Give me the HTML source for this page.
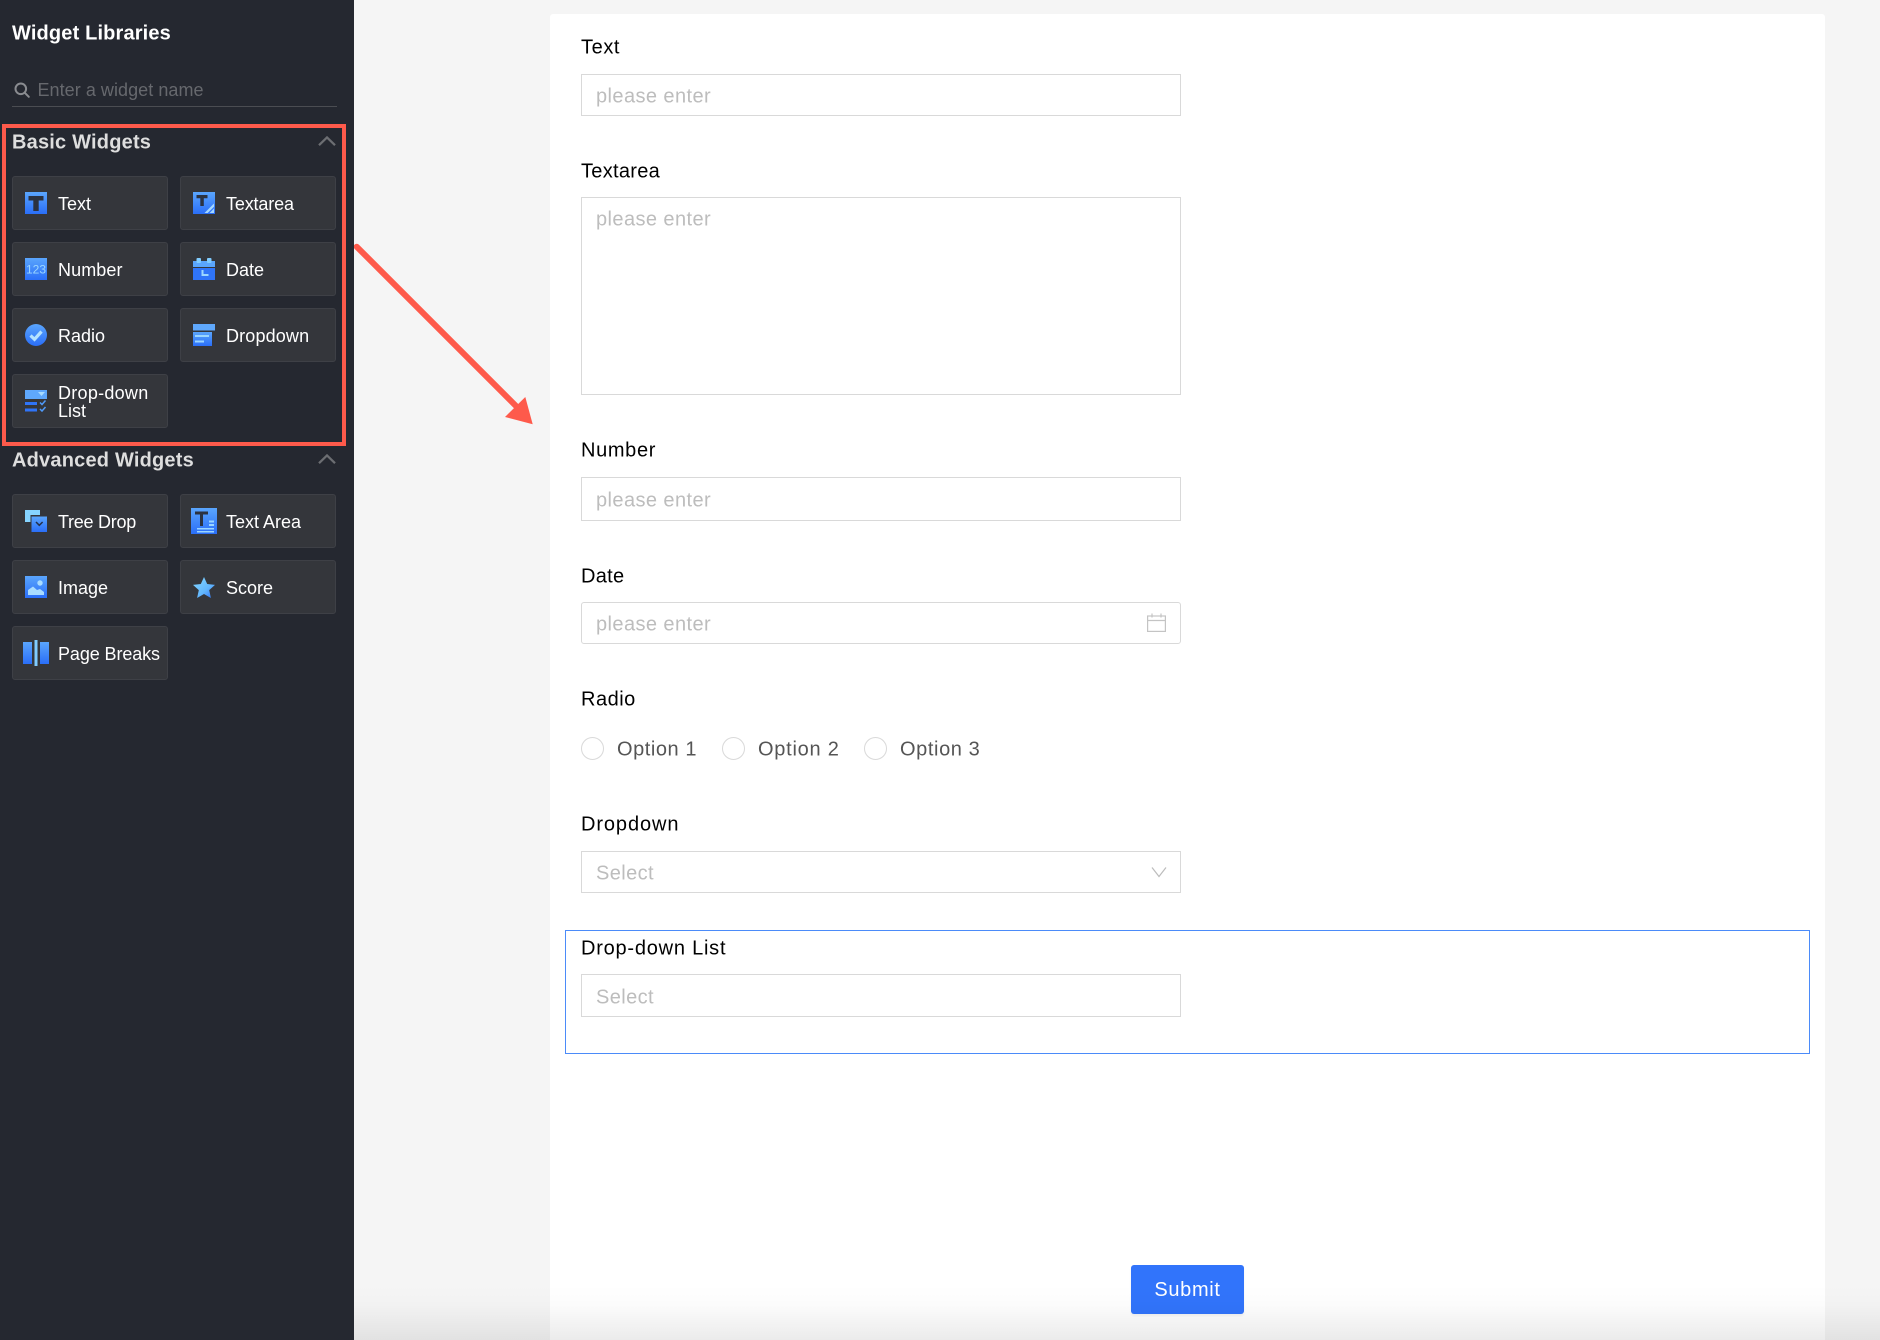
<!DOCTYPE html>
<html>
<head>
<meta charset="utf-8">
<style>
html,body{margin:0;padding:0;width:1880px;height:1340px;overflow:hidden;background:#f5f5f5;font-family:"Liberation Sans",Arial,sans-serif}
*{box-sizing:border-box}
.a{position:absolute}
#side{position:absolute;left:0;top:0;width:354px;height:1340px;background:#252830}
#panel{position:absolute;left:550px;top:14px;width:1275px;height:1326px;background:#fff;border-radius:3px 3px 0 0}
.t{position:absolute;white-space:nowrap;transform:translateY(calc(-50% + 1.2px));line-height:1.15}
.h{font-size:20px;font-weight:bold;color:#dedede;left:12px;letter-spacing:.2px}
.btn{position:absolute;width:156px;height:54px;background:#34363b;border:1px solid #3e4046;border-radius:3px}
.l{position:absolute;white-space:nowrap;font-size:18px;color:#fff;line-height:18px;transform:translateY(calc(-50% + 1px))}
.ic{position:absolute;overflow:visible}
.lab{font-size:20px;color:#000;left:581px}
.ph{font-size:20px;color:#bdbdbd;left:596px;letter-spacing:.42px}
.inp{position:absolute;left:581px;width:600px;border:1px solid #d9d9d9;background:#fff}
.opt{font-size:20px;color:#555;letter-spacing:.55px}
.rad{position:absolute;width:23px;height:23px;top:737px;border:1px solid #d9d9d9;border-radius:50%;background:#fff}
</style>
</head>
<body>
<svg width="0" height="0" style="position:absolute">
<defs>
<linearGradient id="g" x1="0" y1="0" x2="0" y2="1"><stop offset="0" stop-color="#5aa5fc"/><stop offset="1" stop-color="#2a6ef8"/></linearGradient>
<linearGradient id="g2" x1="0" y1="0" x2="1" y2="1"><stop offset="0" stop-color="#86d8ff"/><stop offset=".6" stop-color="#62b6fd"/><stop offset="1" stop-color="#2c70f8"/></linearGradient>
</defs>
</svg>

<div id="panel"></div>

<div id="side">
  <div class="t" style="left:12px;top:33px;font-size:20px;font-weight:bold;color:#fff;letter-spacing:.15px">Widget Libraries</div>
  <svg class="ic" style="left:14px;top:82px" width="16" height="16" viewBox="0 0 16 16"><circle cx="6.800" cy="6.800" r="5.300" fill="none" stroke="#8a8c90" stroke-width="2"/><path d="M10.800 10.800l4 4" stroke="#8a8c90" stroke-width="2" stroke-linecap="round"/></svg>
  <div class="t" style="left:37.500px;top:89px;font-size:18px;color:#66686d;letter-spacing:.05px">Enter a widget name</div>
  <div class="a" style="left:12px;top:106px;width:325px;height:1px;background:#4b4d52"></div>

  <div class="a" style="left:2px;top:124px;width:344px;height:322px;border:4px solid #fe5a4b"></div>

  <div class="t h" style="top:142px">Basic Widgets</div>
  <svg class="ic" style="left:318px;top:135.500px" width="18" height="10" viewBox="0 0 18 10"><path d="M1 9.200L9 1.400l8 7.800" fill="none" stroke="#6c6e72" stroke-width="2.200"/></svg>

  <div class="btn" style="left:12px;top:176px"></div>
  <div class="btn" style="left:180px;top:176px"></div>
  <div class="btn" style="left:12px;top:242px"></div>
  <div class="btn" style="left:180px;top:242px"></div>
  <div class="btn" style="left:12px;top:308px"></div>
  <div class="btn" style="left:180px;top:308px"></div>
  <div class="btn" style="left:12px;top:374px"></div>

  <div class="t h" style="top:459.500px">Advanced Widgets</div>
  <svg class="ic" style="left:318px;top:454px" width="18" height="10" viewBox="0 0 18 10"><path d="M1 9.200L9 1.400l8 7.800" fill="none" stroke="#6c6e72" stroke-width="2.200"/></svg>

  <div class="btn" style="left:12px;top:494px"></div>
  <div class="btn" style="left:180px;top:494px"></div>
  <div class="btn" style="left:12px;top:560px"></div>
  <div class="btn" style="left:180px;top:560px"></div>
  <div class="btn" style="left:12px;top:626px"></div>

  <!-- Text -->
  <svg class="ic" style="left:25px;top:192px" width="22" height="22" viewBox="0 0 22 22"><rect width="22" height="22" fill="url(#g)"/><path d="M3.500 4h15v4.500h-4.800V19H8.300V8.500H3.500z" fill="#2b3240"/></svg>
  <div class="l" style="left:58px;top:203px">Text</div>
  <!-- Textarea -->
  <svg class="ic" style="left:193px;top:192px" width="22" height="22" viewBox="0 0 22 22"><rect width="22" height="22" fill="url(#g)"/><path d="M3.500 3h11v3.300h-3.700V14H7.300V6.300H3.500z" fill="#2b3240"/><path d="M21 11.500L11.500 21h3.200L21 14.700zM21 16.500L16.500 21H21z" fill="#a5d8ff"/></svg>
  <div class="l" style="left:226px;top:203px;letter-spacing:-.15px">Textarea</div>
  <!-- Number -->
  <svg class="ic" style="left:25px;top:258px" width="22" height="22" viewBox="0 0 22 22"><rect width="22" height="22" fill="url(#g)"/><text x="11" y="15.500" text-anchor="middle" font-family="Liberation Sans" font-size="12" fill="#9bd6ff">123</text></svg>
  <div class="l" style="left:58px;top:269px;letter-spacing:.1px">Number</div>
  <!-- Date -->
  <svg class="ic" style="left:193px;top:258px" width="22" height="22" viewBox="0 0 22 22"><rect x="0" y="3" width="22" height="6" fill="#5aa5fc"/><rect x="0" y="10" width="22" height="12" fill="#2f74f8"/><rect x="3.500" y="0" width="4.500" height="5" rx="1" fill="#80ccff"/><rect x="14" y="0" width="4.500" height="5" rx="1" fill="#80ccff"/><path d="M9.500 12v5h6" fill="none" stroke="#9bd6ff" stroke-width="2"/></svg>
  <div class="l" style="left:226px;top:269px">Date</div>
  <!-- Radio -->
  <svg class="ic" style="left:25px;top:324px" width="22" height="22" viewBox="0 0 22 22"><circle cx="11" cy="11" r="11" fill="url(#g)"/><path d="M5.500 11.500l4 3.800L16.500 7.500" fill="none" stroke="#b4e2ff" stroke-width="3.200"/></svg>
  <div class="l" style="left:58px;top:335px">Radio</div>
  <!-- Dropdown -->
  <svg class="ic" style="left:193px;top:324px" width="22" height="22" viewBox="0 0 22 22"><rect x="0" y="0" width="22" height="6.500" fill="#5fa8fc"/><rect x="0" y="8" width="19" height="14" fill="url(#g)"/><rect x="2" y="11" width="14" height="2" fill="#9bd6ff"/><rect x="2" y="16.500" width="9" height="2" fill="#9bd6ff"/></svg>
  <div class="l" style="left:226px;top:335px;letter-spacing:.15px">Dropdown</div>
  <!-- Drop-down List -->
  <svg class="ic" style="left:25px;top:390px" width="22" height="22" viewBox="0 0 22 22"><rect x="0" y="0" width="22" height="9" fill="#5fa8fc"/><path d="M13 2h7l-3.500 4z" fill="#a9dcff"/><rect x="0" y="12" width="12" height="3" fill="#2f74f8"/><rect x="0" y="18.500" width="12" height="3" fill="#2f74f8"/><path d="M15 12.500l2 2 3.500-4M15 19l2 2 3.500-4" fill="none" stroke="#4f9bfb" stroke-width="1.500"/></svg>
  <div class="l" style="left:58px;top:391.500px;letter-spacing:.27px">Drop-down</div>
  <div class="l" style="left:58px;top:409.500px">List</div>

  <!-- Tree Drop -->
  <svg class="ic" style="left:25px;top:510px" width="22" height="22" viewBox="0 0 22 22"><path d="M0 0h15v5H5.500v7H0z" fill="#86d4ff"/><rect x="6.500" y="6.500" width="15.500" height="15.500" fill="url(#g)"/><path d="M11 12l3.300 3.300 3.300-3.300" fill="none" stroke="#24304a" stroke-width="1.500"/></svg>
  <div class="l" style="left:58px;top:521px;letter-spacing:-.27px">Tree Drop</div>
  <!-- Text Area -->
  <svg class="ic" style="left:191px;top:508px" width="26" height="26" viewBox="0 0 26 26"><rect width="26" height="26" fill="url(#g)"/><path d="M4 3.500h13v3h-5V18H9V6.500H4z" fill="#2b3240"/><rect x="18" y="12.500" width="5" height="2" fill="#9bd6ff"/><rect x="18" y="16" width="5" height="2" fill="#9bd6ff"/><rect x="6" y="20" width="17" height="1.500" fill="#9bd6ff"/><rect x="6" y="23" width="17" height="1.500" fill="#9bd6ff"/></svg>
  <div class="l" style="left:226px;top:521px">Text Area</div>
  <!-- Image -->
  <svg class="ic" style="left:25px;top:576px" width="22" height="22" viewBox="0 0 22 22"><rect width="22" height="22" fill="url(#g)"/><circle cx="15" cy="7" r="2.700" fill="#a9dcff"/><path d="M3 19v-5l5-3.500 4 3.500 3-1 4 3v3z" fill="#a9dcff"/></svg>
  <div class="l" style="left:58px;top:587px">Image</div>
  <!-- Score -->
  <svg class="ic" style="left:193px;top:577px" width="22" height="21" viewBox="0 0 22 21"><path d="M11 0l3.200 7 7.800.9-5.800 5.200 1.700 7.900L11 17l-6.900 4 1.700-7.900L0 7.900 7.800 7z" fill="url(#g2)"/></svg>
  <div class="l" style="left:226px;top:587px">Score</div>
  <!-- Page Breaks -->
  <svg class="ic" style="left:23px;top:640px" width="26" height="26" viewBox="0 0 26 26"><rect x="0" y="2" width="9" height="22" fill="url(#g)"/><rect x="17" y="2" width="9" height="22" fill="url(#g)"/><rect x="11.500" y="0" width="3" height="26" fill="#80ccff"/></svg>
  <div class="l" style="left:58px;top:653px;letter-spacing:-.1px">Page Breaks</div>
</div>

<!-- arrow -->
<svg class="a" style="left:354px;top:240px" width="190" height="190" viewBox="354 240 190 190">
  <path d="M356.700 246.700L518 408" stroke="#fe5a4b" stroke-width="6" stroke-linecap="round"/>
  <path d="M532.700 424.300L525.300 397 505 417z" fill="#fe5a4b"/>
</svg>

<!-- Form -->
<div class="t lab" style="top:47px;letter-spacing:.6px">Text</div>
<div class="inp" style="top:74px;height:42px"></div>
<div class="t ph" style="top:96px">please enter</div>

<div class="t lab" style="top:171px;letter-spacing:.3px">Textarea</div>
<div class="inp" style="top:197px;height:198px"></div>
<div class="t ph" style="top:219px">please enter</div>

<div class="t lab" style="top:450px;letter-spacing:.65px">Number</div>
<div class="inp" style="top:477px;height:44px"></div>
<div class="t ph" style="top:500px">please enter</div>

<div class="t lab" style="top:576px;letter-spacing:.3px">Date</div>
<div class="inp" style="top:602px;height:42px;border-radius:3px"></div>
<div class="t ph" style="top:624px">please enter</div>
<svg class="ic" style="left:1147px;top:613px" width="19" height="19" viewBox="0 0 19 19"><rect x=".6" y="3" width="17.800" height="15.400" fill="none" stroke="#c4c4c4" stroke-width="1.200"/><path d="M1 7.500h17M5 .5v4M14 .5v4" fill="none" stroke="#c4c4c4" stroke-width="1.200"/></svg>

<div class="t lab" style="top:698.500px;letter-spacing:.5px">Radio</div>
<div class="rad" style="left:581px;top:736.500px"></div>
<div class="t opt" style="left:617px;top:749px">Option 1</div>
<div class="rad" style="left:722px;top:736.500px"></div>
<div class="t opt" style="left:758px;top:749px;letter-spacing:.75px">Option 2</div>
<div class="rad" style="left:864px;top:736.500px"></div>
<div class="t opt" style="left:900px;top:749px;letter-spacing:.6px">Option 3</div>

<div class="t lab" style="top:823.500px;letter-spacing:.9px">Dropdown</div>
<div class="inp" style="top:851px;height:42px"></div>
<div class="t ph" style="top:873px;letter-spacing:.4px">Select</div>
<svg class="ic" style="left:1151px;top:866px" width="16" height="12" viewBox="0 0 16 12"><path d="M1 1.500l7 9 7-9" fill="none" stroke="#bcbcbc" stroke-width="1.200"/></svg>

<div class="a" style="left:565px;top:930px;width:1245px;height:124px;border:1.400px solid #4b8bf9"></div>
<div class="t lab" style="top:948px;letter-spacing:.77px">Drop-down List</div>
<div class="inp" style="top:974px;height:43px"></div>
<div class="t ph" style="top:997px;letter-spacing:.4px">Select</div>

<div class="a" style="left:1131px;top:1265px;width:113px;height:49px;background:#3174fb;border-radius:3px;color:#fff;font-size:20px;text-align:center;line-height:51px;letter-spacing:.65px;box-shadow:0 2px 2px rgba(0,0,0,.05)">Submit</div>

<!-- bottom fade -->
<div class="a" style="left:354px;top:1285px;width:1526px;height:55px;background:linear-gradient(to bottom,rgba(0,0,0,0),rgba(0,0,0,.01) 35%,rgba(0,0,0,.08))"></div>
</body>
</html>
